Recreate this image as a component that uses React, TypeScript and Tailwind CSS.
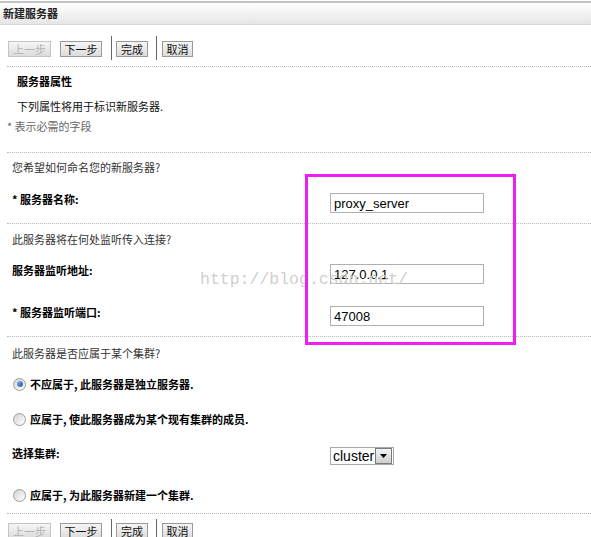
import React from "react";

// shared text styles
const CJK = "font-['Noto_Sans_CJK_SC','Noto_Sans_CJK_JP',sans-serif]";
const DOTTED = "ml-[7px] border-t border-dotted border-[#b8b8b8]";

function WizardButton({ label, disabled, width }: { label: string; disabled?: boolean; width: string }) {
  return (
    <button
      type="button"
      disabled={disabled}
      className={`${width} h-[16px] flex items-center justify-center border text-[11px] leading-none bg-gradient-to-b from-[#f6f6f6] to-[#dcdcdc] ${
        disabled ? "border-[#c4c4c4] text-[#b4b4b4]" : "border-[#9a9a9a] text-[#111]"
      }`}
    >
      {label}
    </button>
  );
}

function Toolbar({ sepTop, btnTop }: { sepTop: string; btnTop: string }) {
  const sep = `${sepTop} w-px h-[24px] bg-[#666]`;
  return (
    <div className="flex items-start pl-[8px]">
      <div className={`flex ${btnTop}`}>
        <WizardButton label="上一步" disabled width="w-[43px]" />
        <div className="w-[9px]" />
        <WizardButton label="下一步" width="w-[42px]" />
      </div>
      <div className={`ml-[9px] ${sep}`} />
      <div className={`ml-[4px] ${btnTop}`}>
        <WizardButton label="完成" width="w-[32px]" />
      </div>
      <div className={`ml-[8px] ${sep}`} />
      <div className={`ml-[5px] ${btnTop}`}>
        <WizardButton label="取消" width="w-[31px]" />
      </div>
    </div>
  );
}

function TextField({ value }: { value: string }) {
  return (
    <input
      type="text"
      defaultValue={value}
      className="mt-[2px] w-[154px] h-[20px] border border-[#b0b0b0] px-[3px] text-[13px] text-black font-['Liberation_Sans',Arial,sans-serif] outline-none"
    />
  );
}

function Radio({ checked, label }: { checked?: boolean; label: string }) {
  return (
    <div className="flex items-center pl-[13px] h-[16px]">
      <span className="w-[13px] h-[13px] rounded-full border border-[#9c9c9c] bg-gradient-to-br from-[#d4d4d4] to-white flex items-center justify-center">
        {checked && (
          <span className="w-[6px] h-[6px] rounded-full bg-gradient-to-br from-[#7fb4ee] to-[#1b5aa6]" />
        )}
      </span>
      <span className="ml-[4px] font-bold text-black">{label}</span>
    </div>
  );
}

function ClusterSelect() {
  return (
    <div className="mt-[2px] w-[64px] h-[18px] border border-[#a8a8a8] flex items-center bg-white">
      <span className="pl-[2px] flex-1 text-[14px] leading-none text-black font-['Liberation_Sans',Arial,sans-serif]">
        cluster
      </span>
      <span className="mr-[1px] w-[17px] h-[16px] border border-[#7c7c7c] bg-gradient-to-b from-[#f4f4f4] to-[#cfcfcf] flex items-center justify-center">
        <svg width="7" height="4" viewBox="0 0 7 4">
          <path d="M0 0h7L3.5 4z" fill="#000" />
        </svg>
      </span>
    </div>
  );
}

function FormRow({ label, children }: { label: string; children: React.ReactNode }) {
  return (
    <div className="flex items-start">
      <div className="w-[330px] pl-[12px] font-bold text-black leading-[16px]">{label}</div>
      {children}
    </div>
  );
}

export default function App() {
  return (
    <div className={`relative w-[591px] h-[537px] overflow-hidden bg-white text-[11px] leading-[16px] text-[#333] ${CJK}`}>
      {/* title bar */}
      <div className="mt-[1px] h-[24px] border-t-2 border-b border-t-[#c4c4c4] border-b-[#d6d6d6] bg-gradient-to-b from-white to-[#e6e6e6] pl-[3px] leading-[21px] font-bold text-[#222]">
        新建服务器
      </div>

      <div className="h-[41px]">
        <Toolbar sepTop="mt-[11px]" btnTop="mt-[16px]" />
      </div>
      <div className={DOTTED} />

      {/* intro */}
      <div className="mt-[6px] pl-[17px] font-bold text-black">服务器属性</div>
      <div className="mt-[9px] pl-[17px] text-[#111]">下列属性将用于标识新服务器.</div>
      <div className="mt-[4px] pl-[7px] text-[#666]">* 表示必需的字段</div>
      <div className={`mt-[18px] ${DOTTED}`} />

      {/* name */}
      <div className="mt-[6px] pl-[12px]">您希望如何命名您的新服务器?</div>
      <div className="mt-[16px]">
        <FormRow label="* 服务器名称:">
          <TextField value="proxy_server" />
        </FormRow>
      </div>
      <div className={`mt-[10px] ${DOTTED}`} />

      {/* listen address */}
      <div className="mt-[7px] pl-[12px]">此服务器将在何处监听传入连接?</div>
      <div className="mt-[15px]">
        <FormRow label="服务器监听地址:">
          <TextField value="127.0.0.1" />
        </FormRow>
      </div>
      <div className="mt-[20px]">
        <FormRow label="* 服务器监听端口:">
          <TextField value="47008" />
        </FormRow>
      </div>
      <div className={`mt-[10px] ${DOTTED}`} />

      {/* cluster */}
      <div className="mt-[8px] pl-[12px]">此服务器是否应属于某个集群?</div>
      <div className="mt-[15px]">
        <Radio checked label="不应属于, 此服务器是独立服务器." />
      </div>
      <div className="mt-[19px]">
        <Radio label="应属于, 使此服务器成为某个现有集群的成员." />
      </div>
      <div className="mt-[18px]">
        <FormRow label="选择集群:">
          <ClusterSelect />
        </FormRow>
      </div>
      <div className="mt-[22px]">
        <Radio label="应属于, 为此服务器新建一个集群." />
      </div>
      <div className={`mt-[10px] ${DOTTED}`} />

      <Toolbar sepTop="mt-[5px]" btnTop="mt-[9px]" />

      {/* blog watermark */}
      <div className="pointer-events-none absolute left-[200px] top-[270px] text-[16.5px] leading-[20px] text-[#cfcfcf] font-['Liberation_Mono','Courier_New',monospace]">
        http://blog.csdn.net/
      </div>

      {/* highlight frame */}
      <div className="pointer-events-none absolute left-[305px] top-[174px] w-[211px] h-[171px] border-[3px] border-[#f01ef0]" />
    </div>
  );
}
